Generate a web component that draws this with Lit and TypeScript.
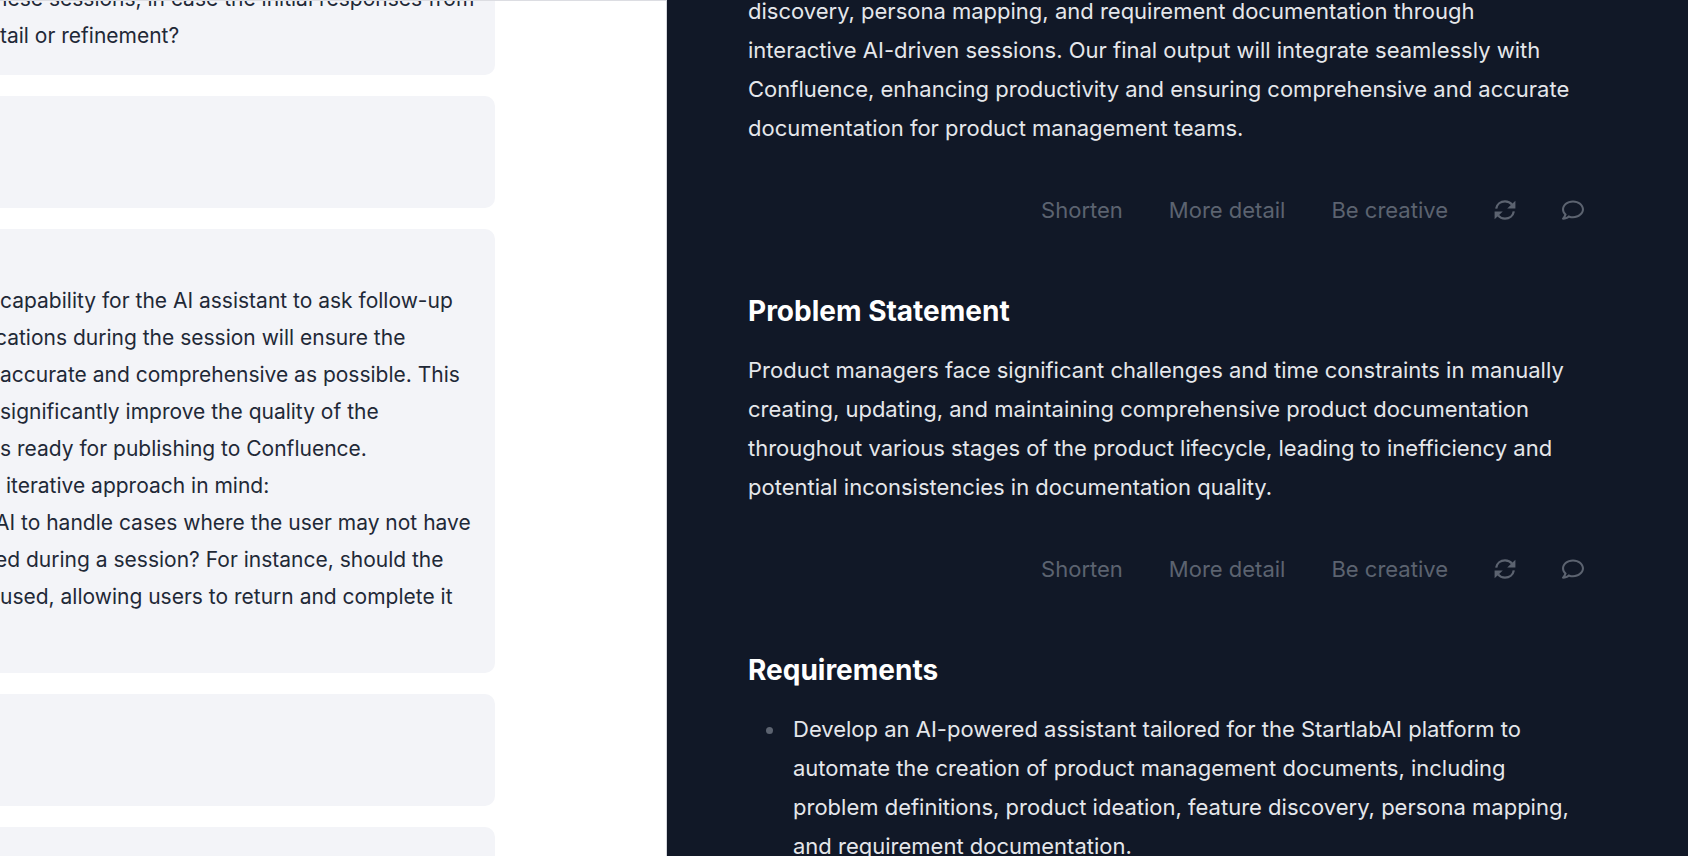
import { LitElement, html, css, svg } from "lit";
import { customElement, property } from "lit/decorators.js";

const refreshIcon = svg`
  <g fill="none" stroke="currentColor" stroke-width="2.3">
    <path d="M2.2 9.6C2.9 5.2 6.6 2.4 11 2.4c2.9 0 5.300 1.100 7 3.200"/>
    <path d="M19.800 12.400C19.100 16.800 15.400 19.600 11 19.600c-2.900 0-5.300-1.100-7-3.200"/>
  </g>
  <path d="M21.400 1.700V9.600H13.200zM.6 20.300V12.400H8.800z"/>`;

const commentIcon = svg`<path d="M256 32C114.6 32 0 125.1 0 240c0 47.6 19.9 91.2 52.9 126.3C38 405.7 7 439.1 6.5 439.5c-6.6 7-8.4 17.2-4.6 26S14.4 480 24 480c61.5 0 110-25.7 139.1-46.3C192 442.8 223.2 448 256 448c141.4 0 256-93.1 256-208S397.4 32 256 32zm0 368c-26.7 0-53.1-4.1-78.4-12.1l-22.7-7.2-19.5 13.8c-14.3 10.1-33.9 21.4-57.5 29 7.3-12.1 14.4-25.7 19.9-40.2l10.6-28.1-20.6-21.8C69.7 314.1 48 282.2 48 240c0-88.2 93.3-160 208-160s208 71.8 208 160-93.3 160-208 160z"/>`;

interface Line {
  text: string;
  /** The line begins partway through a letter. */
  cut?: boolean;
}

const messages: Line[][] = [
  [
    { text: "hese sessions, in case the initial responses from", cut: true },
    { text: "tail or refinement?" },
  ],
  [],
  [
    { text: "capability for the AI assistant to ask follow-up" },
    { text: "cations during the session will ensure the", cut: true },
    { text: "accurate and comprehensive as possible. This" },
    { text: "significantly improve the quality of the" },
    { text: "s ready for publishing to Confluence." },
    { text: " iterative approach in mind:" },
    { text: "AI to handle cases where the user may not have", cut: true },
    { text: "ed during a session? For instance, should the", cut: true },
    { text: "used, allowing users to return and complete it" },
  ],
  [],
  [],
];

@customElement("section-actions")
export class SectionActions extends LitElement {
  static styles = css`
    :host {
      display: flex;
      justify-content: flex-end;
      align-items: center;
      gap: 46px;
      height: 32px;
      margin-top: 46px;
    }
    button {
      display: flex;
      align-items: center;
      padding: 0;
      border: 0;
      background: none;
      color: #5c6370;
      font: inherit;
      line-height: 32px;
      white-space: nowrap;
      cursor: pointer;
    }
    button:hover {
      color: #9ca3af;
    }
    svg {
      width: 22px;
      height: 22px;
      fill: currentColor;
    }
  `;

  render() {
    return html`
      <button type="button">Shorten</button>
      <button type="button">More detail</button>
      <button type="button">Be creative</button>
      <button type="button" aria-label="Regenerate">
        <svg viewBox="0 0 22 22" aria-hidden="true">${refreshIcon}</svg>
      </button>
      <button type="button" aria-label="Comment">
        <svg viewBox="0 0 512 512" aria-hidden="true">${commentIcon}</svg>
      </button>
    `;
  }
}

@customElement("chat-message")
export class ChatMessage extends LitElement {
  @property({ attribute: false }) lines: Line[] = [];

  static styles = css`
    :host {
      display: block;
      box-sizing: border-box;
      flex: none;
      min-height: 112px;
      padding: 53px 0 58px;
      border-radius: 0 10px 10px 0;
      background: #f3f4f8;
      color: #1f2937;
      line-height: 37px;
    }
    :host(.empty) {
      padding: 0;
    }
    :host(.first) {
      min-height: 0;
      padding: 0 0 21px;
    }
    .line {
      margin: 0;
      white-space: pre;
    }
    .cut {
      margin-left: -5px;
    }
  `;

  render() {
    return this.lines.map(
      (l) => html`<p class=${l.cut ? "line cut" : "line"}>${l.text}</p>`
    );
  }
}

@customElement("app-root")
export class AppRoot extends LitElement {
  static styles = css`
    :host {
      display: grid;
      grid-template-columns: 667fr 1021fr;
      height: 100vh;
      overflow: hidden;
      background: #ffffff;
      font-family: Inter, "Liberation Sans", sans-serif;
      font-size: 22px;
    }
    .chat {
      box-sizing: border-box;
      display: flex;
      flex-direction: column;
      gap: 21px;
      min-width: 0;
      overflow: hidden;
      padding-right: 171px;
      border-top: 1px solid #dcdde2;
      border-right: 1px solid #d5d7dc;
      font-size: 21px;
    }
    .first {
      margin-top: -21px;
    }
    .document {
      min-width: 0;
      overflow: hidden;
      padding: 0 104px 0 81px;
      background: #111827;
      color: #e5e7eb;
      line-height: 39px;
    }
    section {
      margin-bottom: 67px;
    }
    section:first-child {
      margin-top: -8px;
    }
    h2 {
      margin: 0 0 22px;
      color: #ffffff;
      font-size: 28px;
      font-weight: 700;
      line-height: 36px;
    }
    p,
    ul {
      margin: 0;
      padding: 0;
    }
    li {
      display: grid;
      grid-template-columns: 7px 1fr;
      column-gap: 20px;
      padding-left: 18px;
      list-style: none;
    }
    li::before {
      content: "";
      width: 7px;
      height: 7px;
      margin-top: 17px;
      border-radius: 50%;
      background: #5c6370;
    }
  `;

  render() {
    return html`
      <div class="chat">
        ${messages.map(
          (lines, i) => html`<chat-message
            class=${i === 0 ? "first" : lines.length ? "" : "empty"}
            .lines=${lines}
          ></chat-message>`
        )}
      </div>
      <main class="document">
        <section>
          <p>
            discovery, persona mapping, and requirement documentation through
            interactive AI-driven sessions. Our final output will integrate
            seamlessly with Confluence, enhancing productivity and ensuring
            comprehensive and accurate documentation for product management
            teams.
          </p>
          <section-actions></section-actions>
        </section>
        <section>
          <h2>Problem Statement</h2>
          <p>
            Product managers face significant challenges and time constraints in
            manually creating, updating, and maintaining comprehensive product
            documentation throughout various stages of the product lifecycle,
            leading to inefficiency and potential inconsistencies in
            documentation quality.
          </p>
          <section-actions></section-actions>
        </section>
        <section>
          <h2>Requirements</h2>
          <ul>
            <li>
              <span>
                Develop an AI-powered assistant tailored for the StartlabAI
                platform to automate the creation of product management
                documents, including problem definitions, product ideation,
                feature discovery, persona mapping, and requirement
                documentation.
              </span>
            </li>
          </ul>
        </section>
      </main>
    `;
  }
}
